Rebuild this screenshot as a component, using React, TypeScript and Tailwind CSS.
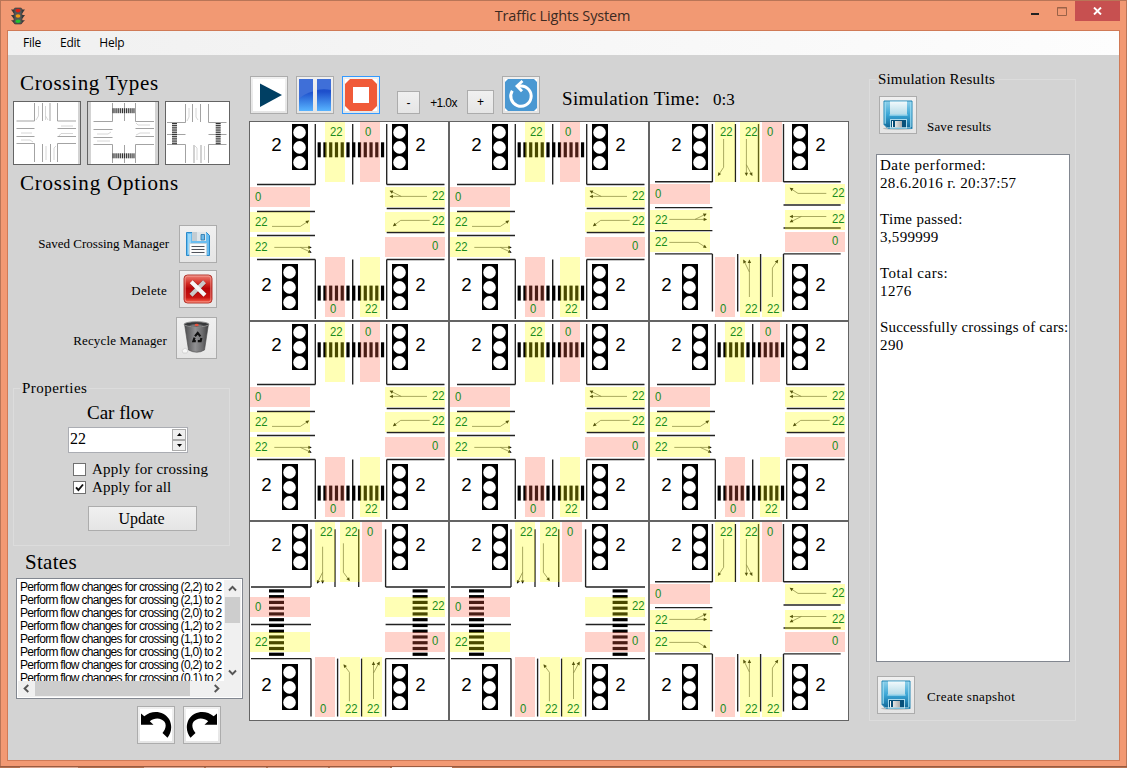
import React from "react";

type Pt = [number, number];
type Lane = { x: number; y: number; v: number; vertical?: boolean; tx: number; ty: number };
type Crossing = { lines: number[][]; arrows: Pt[][]; lanes: Lane[]; walks: { x: number; y: number; vertical?: boolean }[] };

const SERIF = "font-['Liberation_Serif',serif]";

const typeA: Crossing = {
  lines: [
    [66.3, 3, 66.3, 63.5], [103.7, 3, 103.7, 63.5], [137.7, 3, 137.7, 63.5],
    [8, 63.5, 66.3, 63.5], [137.7, 63.5, 195.5, 63.5],
    [8, 90.5, 66, 90.5], [8, 114.5, 66, 114.5], [8, 138.5, 66.3, 138.5],
    [137.7, 87.5, 195.5, 87.5], [137.7, 111.5, 195.5, 111.5], [137.7, 138.5, 195.5, 138.5],
    [66.3, 138.5, 66.3, 198], [103.7, 138.5, 103.7, 198], [137.7, 138.5, 137.7, 198],
  ],
  arrows: [
    [[23, 105.4], [51.3, 105.4], [59.5, 100]],
    [[25.3, 126.4], [62, 126.4]], [[51.3, 126.4], [62, 131.3]],
    [[178, 75.4], [141.3, 75.4]], [[152.3, 75.4], [141.3, 70]],
    [[180.7, 99.4], [151.7, 99.4], [144.5, 104.7]],
  ],
  lanes: [
    { x: 76, y: 1, v: 22, vertical: true, tx: 81, ty: 15 },
    { x: 111, y: 1, v: 0, vertical: true, tx: 116, ty: 15 },
    { x: 1, y: 66, v: 0, tx: 6, ty: 80 }, { x: 1, y: 91, v: 22, tx: 6, ty: 105 }, { x: 1, y: 116, v: 22, tx: 6, ty: 130 },
    { x: 136, y: 66, v: 22, tx: 183, ty: 79 }, { x: 136, y: 91, v: 22, tx: 183, ty: 104 }, { x: 136, y: 116, v: 0, tx: 183, ty: 129 },
    { x: 76, y: 136, v: 0, vertical: true, tx: 81, ty: 192 },
    { x: 111, y: 136, v: 22, vertical: true, tx: 116, ty: 192 },
  ],
  walks: [{ x: 68.6, y: 21.3 }, { x: 68.6, y: 164.6 }],
};

const typeB: Crossing = {
  lines: [
    [63.4, 3, 63.4, 61], [86.4, 3, 86.4, 61], [109.5, 3, 109.5, 61], [134.5, 3, 134.5, 61],
    [6, 60.7, 63.4, 60.7], [134.5, 60.7, 191.7, 60.7],
    [6, 86.6, 63.4, 86.6], [6, 109.6, 63.4, 109.6], [6, 132.8, 63.4, 132.8],
    [134.5, 84, 191.7, 84], [134.5, 107, 191.7, 107], [134.5, 132.8, 191.7, 132.8],
    [63.4, 133, 63.4, 190.5], [88.7, 133, 88.7, 190.5], [111.6, 133, 111.6, 190.5], [134.5, 133, 134.5, 190.5],
  ],
  arrows: [
    [[74.6, 18], [74.6, 46.3], [69.3, 54.3]],
    [[97.4, 18], [97.4, 54.3]], [[97.4, 43.7], [103, 54.3]],
    [[20.3, 98.4], [57.3, 98.4]], [[46, 98.4], [57, 93]],
    [[20.3, 121.4], [49, 121.4], [57, 126.5]],
    [[177.3, 72.4], [149, 72.4], [141.3, 67.3]],
    [[177.3, 95.5], [141.3, 95.5]], [[152.3, 95.5], [141.3, 101]],
    [[100.4, 176], [100.4, 139.3]], [[100.4, 151], [94.7, 139.3]],
    [[123.4, 176], [123.4, 147], [128.7, 139.3]],
  ],
  lanes: [
    { x: 66, y: 1, v: 22, vertical: true, tx: 71, ty: 15 },
    { x: 91, y: 1, v: 22, vertical: true, tx: 96, ty: 15 },
    { x: 113, y: 1, v: 0, vertical: true, tx: 118, ty: 15 },
    { x: 1, y: 63, v: 0, tx: 6, ty: 77 }, { x: 1, y: 89, v: 22, tx: 6, ty: 103 }, { x: 1, y: 111, v: 22, tx: 6, ty: 125 },
    { x: 136, y: 63, v: 22, tx: 183, ty: 76 }, { x: 136, y: 89, v: 22, tx: 183, ty: 102 }, { x: 136, y: 111, v: 0, tx: 183, ty: 124 },
    { x: 66, y: 136, v: 0, vertical: true, tx: 71, ty: 192 },
    { x: 91, y: 136, v: 22, vertical: true, tx: 96, ty: 192 },
    { x: 113, y: 136, v: 22, vertical: true, tx: 118, ty: 192 },
  ],
  walks: [],
};

const typeC: Crossing = {
  lines: [
    [62, 8.3, 62, 66], [86, 8.3, 86, 66], [109.7, 8.3, 109.7, 66], [136.6, 8.3, 136.6, 66],
    [2, 66, 62, 66], [136.6, 66, 196, 66], [2, 103.5, 62, 103.5], [136.6, 103.5, 196, 103.5],
    [2, 137.6, 62, 137.6], [136.6, 137.6, 196, 137.6],
    [62, 137.6, 62, 195.5], [88.6, 137.6, 88.6, 195.5], [112.6, 137.6, 112.6, 195.5], [136.6, 137.6, 136.6, 195.5],
  ],
  arrows: [
    [[73.6, 25.7], [73.6, 62]], [[73.6, 51.3], [68.3, 62]],
    [[94.4, 22.3], [94.4, 51.3], [100.3, 59.3]],
    [[100.4, 180.3], [100.4, 151.3], [95, 144]],
    [[124.5, 178], [124.5, 141.3]], [[124.5, 152], [130.3, 141.3]],
  ],
  lanes: [
    { x: 66, y: 1, v: 22, vertical: true, tx: 71, ty: 15 },
    { x: 91, y: 1, v: 22, vertical: true, tx: 96, ty: 15 },
    { x: 113, y: 1, v: 0, vertical: true, tx: 118, ty: 15 },
    { x: 1, y: 76, v: 0, tx: 6, ty: 90 }, { x: 1, y: 111, v: 22, tx: 6, ty: 125 },
    { x: 136, y: 76, v: 22, tx: 183, ty: 89 }, { x: 136, y: 111, v: 0, tx: 183, ty: 124 },
    { x: 66, y: 136, v: 0, vertical: true, tx: 71, ty: 192 },
    { x: 91, y: 136, v: 22, vertical: true, tx: 96, ty: 192 },
    { x: 113, y: 136, v: 22, vertical: true, tx: 118, ty: 192 },
  ],
  walks: [{ x: 20, y: 68.3, vertical: true }, { x: 163.6, y: 68.3, vertical: true }],
};

function Arrow({ pts }: { pts: Pt[] }) {
  const [x1, y1] = pts[pts.length - 2];
  const [x, y] = pts[pts.length - 1];
  const deg = (Math.atan2(y - y1, x - x1) * 180) / Math.PI;
  return (
    <g>
      <polyline points={pts.map((p) => p.join(",")).join(" ")} fill="none" stroke="#555" strokeWidth="0.7" />
      <path d="M0.8 0L-2.6 -1.7L-2.6 1.7Z" fill="#111" transform={`translate(${x} ${y}) rotate(${deg})`} />
    </g>
  );
}

function Signal({ x, y }: { x: number; y: number }) {
  return (
    <g>
      <rect x={x} y={y} width="16" height="46" fill="#000" />
      {[8.4, 23.4, 38.4].map((dy) => (
        <circle key={dy} cx={x + 7.5} cy={y + dy} r="6.3" fill="#fff" />
      ))}
    </g>
  );
}

function CrossingTile({ c }: { c: Crossing }) {
  return (
    <div className="h-[200px] w-[200px] border border-[#646464] bg-white">
      <svg className="block" width="198" height="198" viewBox="1 1 198 198">
        {c.lines.map((l, i) => (
          <line key={i} x1={l[0]} y1={l[1]} x2={l[2]} y2={l[3]} stroke="#222" strokeWidth="1.35" />
        ))}
        {c.walks.map((w, i) =>
          Array.from({ length: 12 }, (_, k) => (
            <rect
              key={`${i}-${k}`}
              x={w.vertical ? w.x : w.x + k * 5.76}
              y={w.vertical ? w.y + k * 5.76 : w.y}
              width={w.vertical ? 15 : 3.2}
              height={w.vertical ? 3.2 : 15}
              fill="#000"
            />
          )),
        )}
        {c.arrows.map((a, i) => <Arrow key={i} pts={a} />)}
        {c.lanes.map((l, i) => (
          <rect
            key={i}
            x={l.x}
            y={l.y}
            width={l.vertical ? 20 : 60}
            height={l.vertical ? 60 : 20}
            fill={l.v ? "#ffff00" : "#ff6347"}
            fillOpacity="0.29"
          />
        ))}
        <g fontFamily="Liberation Sans, sans-serif" fontSize="12.3" fill="#1c8c1c">
          {c.lanes.map((l, i) => (
            <text key={i} x={l.tx} y={l.ty} textLength={l.v ? 12.6 : 6.3} lengthAdjust="spacingAndGlyphs">{l.v}</text>
          ))}
        </g>
        <Signal x={43} y={3} />
        <Signal x={143} y={3} />
        <Signal x={33} y={143} />
        <Signal x={143} y={143} />
        <g fontFamily="Liberation Sans, sans-serif" fontSize="18.67" fill="#000">
          <text x="22.2" y="30">2</text>
          <text x="166.2" y="30">2</text>
          <text x="12.2" y="170">2</text>
          <text x="166.2" y="170">2</text>
        </g>
      </svg>
    </div>
  );
}

function Bars({ x, y, vertical }: { x: number; y: number; vertical?: boolean }) {
  return (
    <g fill="#333">
      {Array.from({ length: 12 }, (_, k) => (
        <rect
          key={k}
          x={vertical ? x : x + k * 1.9}
          y={vertical ? y + k * 1.83 : y}
          width={vertical ? 5 : 1.15}
          height={vertical ? 1.1 : 5}
        />
      ))}
    </g>
  );
}

function Thumb({ w, d, faint, side, children }: { w: string; d: string; faint: string; side: [number, number][]; children?: React.ReactNode }) {
  return (
    <div className={`h-16 border border-[#646464] bg-white ${w}`}>
      <svg className="block h-full w-full">
        {side.map(([x, sw]) => <rect key={x} x={x} y="0" width={sw} height="62" fill="#d3d3d3" />)}
        <path d={d} fill="none" stroke="#999" strokeWidth="0.9" />
        <path d={faint} fill="none" stroke="#cccccc" strokeWidth="0.8" />
        {children}
      </svg>
    </div>
  );
}

function Btn({ size = "h-[38px] w-[38px]", border = "border-[#acacac]", children }: { size?: string; border?: string; children: React.ReactNode }) {
  return (
    <button className={`flex shrink-0 items-center justify-center border bg-linear-to-b from-[#f0f0f0] to-[#e5e5e5] ${border} ${size}`}>
      {children}
    </button>
  );
}

function BlueDisk() {
  return (
    <svg width="32" height="32" viewBox="0 0 32 32">
      <defs>
        <linearGradient id="bd" x1="0" y1="0" x2="0" y2="1">
          <stop offset="0" stopColor="#8fd0ea" />
          <stop offset="0.5" stopColor="#3aa6d6" />
          <stop offset="1" stopColor="#0e6394" />
        </linearGradient>
        <linearGradient id="bl" x1="0" y1="0" x2="0" y2="1">
          <stop offset="0" stopColor="#f2fafc" />
          <stop offset="1" stopColor="#b5dbe8" />
        </linearGradient>
        <linearGradient id="bs" x1="0" y1="0" x2="1" y2="0">
          <stop offset="0" stopColor="#fff" />
          <stop offset="1" stopColor="#aaa" />
        </linearGradient>
      </defs>
      <ellipse cx="16" cy="29.5" rx="15" ry="1.5" fill="#bbb" />
      <path d="M2 2H30V29.5H6L2 25.5Z" fill="url(#bd)" stroke="#2587b5" strokeWidth="1" />
      <path d="M3.2 3V24.8M28.8 3V28" stroke="#9bdaf0" strokeWidth="1.2" />
      <rect x="8" y="2.5" width="17" height="13" fill="url(#bl)" />
      <path d="M7.5 16H25.5" stroke="#c8ecf6" strokeWidth="1" />
      <rect x="8.5" y="20.5" width="16" height="8.5" fill="#08507a" stroke="#a9d9ec" />
      <rect x="10" y="22" width="10" height="6.5" fill="url(#bs)" />
      <rect x="11" y="22" width="2" height="6" fill="#064a73" />
      <path d="M5 28.8H29" stroke="#d6f1fa" strokeWidth="0.7" />
    </svg>
  );
}

function SaveDisk() {
  return (
    <svg width="26" height="26" viewBox="0 0 26 26">
      <path d="M1.5 1.5H21.5L24.5 4.5V24.5H1.5Z" fill="#69bdf0" stroke="#2a8bcb" />
      <path d="M3 3H6V23H3Z" fill="#9ad7f8" />
      <path d="M7 1H21V10H7Z" fill="#dfe5e9" />
      <path d="M7 1H12V10H7Z" fill="#c3ccd2" />
      <path d="M16 3.5H19.5V9H16Z" fill="#6fb9e8" stroke="#2473a8" strokeWidth="0.8" />
      <path d="M4.5 12.5H21.5V24.5H4.5Z" fill="#fbfbfb" stroke="#c8d2d8" strokeWidth="0.8" />
      <path d="M6.5 15.5H19.5M6.5 18.5H19.5M6.5 21.5H19.5" stroke="#50545c" strokeWidth="1" />
    </svg>
  );
}

function DeleteIcon() {
  return (
    <svg width="32" height="32" viewBox="0 0 32 32">
      <defs>
        <linearGradient id="dr" x1="0" y1="0" x2="0" y2="1">
          <stop offset="0" stopColor="#ee8378" />
          <stop offset="0.3" stopColor="#d22a22" />
          <stop offset="0.48" stopColor="#b80508" />
          <stop offset="0.8" stopColor="#c91412" />
          <stop offset="1" stopColor="#ff6f55" />
        </linearGradient>
      </defs>
      <rect x="2" y="2" width="28" height="28" rx="3.5" fill="url(#dr)" stroke="#b23a32" />
      <rect x="3.2" y="3.2" width="25.6" height="25.6" rx="2.5" fill="none" stroke="#f3a49b" strokeWidth="0.7" />
      <path d="M9.5 9.2L23 22.2M22.5 9L9 22.4" stroke="#6d0f0e" strokeWidth="5.2" opacity="0.5" />
      <path d="M22.5 8.8L9 22.2" stroke="#c9c9c9" strokeWidth="4.2" />
      <path d="M9.2 8.8L23 22.2" stroke="#f7f7f7" strokeWidth="4.2" />
    </svg>
  );
}

function BinIcon() {
  return (
    <svg width="36" height="36" viewBox="0 0 36 36">
      <defs>
        <linearGradient id="bin" x1="0" y1="0" x2="1" y2="0">
          <stop offset="0" stopColor="#4c4c4e" />
          <stop offset="0.45" stopColor="#909092" />
          <stop offset="0.75" stopColor="#6b6b6d" />
          <stop offset="1" stopColor="#3e3e40" />
        </linearGradient>
      </defs>
      <path d="M5.5 4L9.5 30Q18 34.5 25.5 30L29.5 4Z" fill="url(#bin)" stroke="#4a4a4a" strokeWidth="0.6" />
      <ellipse cx="17.5" cy="4.3" rx="12.3" ry="2.6" fill="#37383a" stroke="#8c8c8c" strokeWidth="1" />
      <path d="M10 5.2Q17 3.5 25 5.2Q17 7 10 5.2Z" fill="#77777a" />
      <ellipse cx="17.7" cy="5" rx="2" ry="1.3" fill="#e4523e" />
      <path d="M16 16.2L18.7 12.9L21.4 16.4M22.4 18L21.6 21.2H18.8M16.8 21.2H14.4L15.6 17.6" fill="none" stroke="#111" strokeWidth="2.2" />
      <path d="M3 30.5L6 28L9 30L8 33H4Z" fill="#f7f7f7" stroke="#c5c5c5" strokeWidth="0.6" />
    </svg>
  );
}

function UndoIcon({ flip }: { flip?: boolean }) {
  return (
    <svg width="32" height="32" viewBox="0 0 32 32" className={flip ? "-scale-x-100" : ""}>
      <rect width="32" height="32" fill="#fff" />
      <path d="M1 4.5L4.3 7.3C12 0.5 24 2 29 10C33 17 31 24.5 27.5 28.7L22.5 24C26 20 26.5 15.5 24.5 12.8C21.5 8.7 14.5 8 9.8 12.3L13.5 15.8H1Z" fill="#000" />
    </svg>
  );
}

function TrafficIcon() {
  return (
    <svg width="16" height="18" viewBox="0 0 16 18">
      <path d="M1 2.5H15L12.5 6H3.5ZM1 8H15L12.5 11.5H3.5ZM1 13.3H15L11.5 16.5H4.5Z" fill="#3c3c3c" />
      <rect x="4" y="1" width="8" height="16" rx="1.5" fill="#555" stroke="#333" strokeWidth="0.6" />
      <ellipse cx="8" cy="3.6" rx="2.4" ry="1.8" fill="#e01d12" />
      <ellipse cx="8" cy="9" rx="2.4" ry="1.8" fill="#f39b12" />
      <ellipse cx="8" cy="14.3" rx="2.4" ry="1.8" fill="#1fc42f" />
    </svg>
  );
}

function Check({ label, checked, tracking }: { label: string; checked?: boolean; tracking: string }) {
  return (
    <label className="flex h-[13px] items-center gap-1.5">
      <span className="flex h-[13px] w-[13px] items-center justify-center border border-[#707070] bg-white">
        {checked && (
          <svg width="11" height="11" viewBox="0 0 11 11">
            <path d="M2 5.3L4.4 8L9 2.5" fill="none" stroke="#111" strokeWidth="1.9" />
          </svg>
        )}
      </span>
      <span className={`text-[15px] leading-[13px] whitespace-nowrap ${tracking}`}>{label}</span>
    </label>
  );
}

function Chevron({ d }: { d: string }) {
  return (
    <svg width="9" height="9" viewBox="0 0 9 9">
      <path d={d} fill="none" stroke="#555" strokeWidth="1.9" />
    </svg>
  );
}

const tiles = [typeA, typeA, typeB, typeA, typeA, typeA, typeC, typeC, typeB];
const states = ["(2,2)", "(2,1)", "(2,0)", "(1,2)", "(1,1)", "(1,0)", "(0,2)", "(0,1)"];

function LeftPanel() {
  return (
    <aside className={`flex w-[241px] shrink-0 flex-col pt-4 ${SERIF}`}>
      <h2 className="pl-3 text-[21px] leading-6 tracking-[0.67px]">Crossing Types</h2>
      <div className="mt-1.5 flex pl-[5px]">
        <Thumb
          w="w-[68px]"
          side={[[64, 3]]}
          d="M20.5 1V19H2.5M28.5 1V19M36 1V19M43.5 1V19H62M2.5 26.5H20.5M2.5 34.5H20.5M2.5 41.5H20.5V60M43.5 26.5H62M43.5 34.5H62M62 41.5H43.5V60M28.5 42V60M36.5 42V60"
          faint="M24.5 4V14L22 18M31.5 4V18M34 18L31.5 14M7 31H18M7 38H16L19 40M59 24H47M59 31.5H47L45 34M32 58V44M40 58V46L42 44"
        />
        <div className="w-1.5" />
        <Thumb
          w="w-[72px]"
          side={[[0, 3], [67, 3]]}
          d="M24.5 1V19.5H5.5M36.5 1V19M47.5 1V19.5H66M5.5 27.5H24.5M5.5 35.5H24.5M5.5 42.5H24.5V61M47.5 26.5H66M47.5 34.5H66M66 42.5H47.5V61M36.5 43V61"
          faint="M9 32H20L23 30M9 39H22M62 23H50L48 21M62 31H52L48 33"
        >
          <Bars x={24.5} y={6.2} />
          <Bars x={24.5} y={51.3} />
        </Thumb>
        <div className="w-1.5" />
        <Thumb
          w="w-[65px]"
          side={[]}
          d="M19.5 2V20.5H1M26.5 2V20M34.5 2V20M42.5 2V20.5H60.5M1 32.5H19.5M42.5 32.5H60.5M1 42.5H19.5V61M28 43V61M35 43V61M60.5 42.5H42.5V61"
          faint="M23 6V15L21 19M30 6V15L32 18M31 58V46L29 44M38.5 58V44"
        >
          <Bars x={6} y={21} vertical />
          <Bars x={49.7} y={21} vertical />
        </Thumb>
      </div>
      <h2 className="mt-1.5 pl-3 text-[21px] leading-6 tracking-[0.78px]">Crossing Options</h2>

      <div className="mt-[30px] flex flex-col items-end pr-8 text-[13px]">
        <div className="flex items-center gap-2.5"><span>Saved Crossing Manager</span><Btn><SaveDisk /></Btn></div>
        <div className="mt-[7px] flex items-center gap-3"><span className="pt-1 tracking-[0.3px]">Delete</span><Btn><DeleteIcon /></Btn></div>
        <div className="mt-[9px] flex items-center gap-[9px]">
          <span className="pt-1.5 tracking-[0.17px]">Recycle Manager</span>
          <Btn size="h-[42px] w-[41px]"><BinIcon /></Btn>
        </div>
      </div>

      <section className="mt-[29px] ml-[5px] h-[158px] w-[217px] border border-[#dcdcdc]">
        <h3 className="-mt-[10px] ml-1.5 w-fit bg-[#d3d3d3] px-0.5 text-[15px] leading-[18px] tracking-[0.45px]">Properties</h3>
        <div className="mt-[5px] pl-[73px] text-[19px] leading-[22px]">Car flow</div>
        <div className="mt-[3px] ml-[54px] flex h-[26px] w-[120px] justify-between border border-[#abadb3] bg-white p-px">
          <span className="text-[16px] leading-5">22</span>
          <div className="flex w-3.5 flex-col">
            <div className="flex flex-1 items-center justify-center border border-[#acacac] bg-[#efefef]">
              <svg width="5" height="3"><path d="M0 3L2.5 0L5 3Z" /></svg>
            </div>
            <div className="flex flex-1 items-center justify-center border border-[#acacac] bg-[#efefef]">
              <svg width="5" height="3"><path d="M0 0L2.5 3L5 0Z" /></svg>
            </div>
          </div>
        </div>
        <div className="mt-2.5 ml-[59px] flex flex-col gap-[5px]">
          <Check label="Apply for crossing" tracking="tracking-[0.2px]" />
          <Check label="Apply for all" checked tracking="tracking-[0.15px]" />
        </div>
        <button className="mt-3 ml-[74px] block h-[25px] w-[109px] border border-[#acacac] bg-linear-to-b from-[#f0f0f0] to-[#e5e5e5] pr-0.5 text-[16px] leading-[22px]">Update</button>
      </section>

      <h2 className="mt-1 pl-[17px] text-[21px] leading-6 tracking-[0.3px]">States</h2>
      <div className="mt-1 ml-2 flex h-[121px] w-[227px] flex-col border border-[#828790] bg-white p-px font-['Liberation_Sans',sans-serif]">
        <div className="flex h-[101px] justify-between">
          <div className="w-[206px] overflow-hidden pt-px pl-0.5">
            {states.map((s) => (
              <div key={s} className="h-[13px] text-[12px] leading-[13px] tracking-[-0.71px] whitespace-nowrap">Perform flow changes for crossing {s} to 2</div>
            ))}
          </div>
          <div className="flex w-[17px] flex-col items-center justify-between bg-[#f0f0f0] pb-1">
            <div className="flex h-[17px] items-center"><Chevron d="M1 6.5L4.5 2.8L8 6.5" /></div>
            <div className="h-[26px] w-[15px] bg-[#cdcdcd]" />
            <div className="flex-1" />
            <Chevron d="M1 2.5L4.5 6.2L8 2.5" />
          </div>
        </div>
        <div className="flex flex-1 items-center bg-[#f0f0f0] pb-px pl-1">
          <Chevron d="M6.3 1L2.6 4.5L6.3 8" />
          <div className="ml-1 h-[15px] w-[155px] bg-[#cdcdcd]" />
          <div className="ml-[22px] flex"><Chevron d="M2.7 1L6.4 4.5L2.7 8" /></div>
        </div>
      </div>
      <div className="mt-[7px] flex gap-2 pl-[129px]">
        <Btn><UndoIcon /></Btn>
        <Btn><UndoIcon flip /></Btn>
      </div>
    </aside>
  );
}

function Center() {
  return (
    <main className="flex w-[600px] shrink-0 flex-col">
      <div className="flex h-[66px] items-end pb-[7px] pl-px font-['Liberation_Sans',sans-serif] text-[12px]">
        <Btn>
          <svg width="32" height="32"><rect width="32" height="32" fill="#fff" /><path d="M7 4.5L29 16L7 28Z" fill="#003f63" /></svg>
        </Btn>
        <div className="w-2" />
        <Btn>
          <svg width="32" height="32">
            <defs>
              <linearGradient id="pz" x1="0" y1="0" x2="0" y2="1"><stop offset="0" stopColor="#1648c4" /><stop offset="0.4" stopColor="#1e50cc" /><stop offset="1" stopColor="#58b4ff" /></linearGradient>
            </defs>
            <path d="M0 0H14V32H0ZM18 0H32V32H18Z" fill="url(#pz)" />
            <path d="M0 0H14V12.5Q5 14.5 0 20ZM18 0H32V11Q25 9.5 18 11Z" fill="#3f6fd8" />
          </svg>
        </Btn>
        <div className="w-2" />
        <Btn border="border-[#3399ff]">
          <svg width="32" height="32">
            <rect width="32" height="32" fill="#fff" />
            <path d="M5 0H27L32 5V27L27 32H5L0 27V5Z" fill="#f05a38" />
            <rect x="8" y="8" width="16" height="16" fill="#fff" />
          </svg>
        </Btn>
        <div className="w-[17px]" />
        <Btn size="h-[23px] w-[23px]">-</Btn>
        <span className="w-[47px] pb-[3px] text-center leading-4 tracking-[-0.6px]">+1.0x</span>
        <Btn size="h-6 w-[27px]">+</Btn>
        <div className="w-2" />
        <Btn>
          <svg width="32" height="32">
            <rect width="32" height="32" fill="#fff" />
            <path d="M3 0H29L32 3V29L29 32H3L0 29V3Z" fill="#4a98d2" />
            <path d="M7.3 11.7A10.2 10.2 0 1 0 16 6.9H12" fill="none" stroke="#fff" strokeWidth="3" />
            <path d="M17.5 2L12 7L17 12.2" fill="none" stroke="#fff" strokeWidth="2.8" />
          </svg>
        </Btn>
        <div className={`flex items-baseline pb-0.5 pl-[22px] leading-6 ${SERIF}`}>
          <span className="text-[19px] tracking-[0.35px]">Simulation Time:</span>
          <span className="pl-[13px] text-[17px]">0:3</span>
        </div>
      </div>
      <div className="grid w-[600px] grid-cols-3">
        {tiles.map((t, i) => <CrossingTile key={i} c={t} />)}
      </div>
    </main>
  );
}

function Results() {
  return (
    <aside className={`mt-6 ml-5 flex h-[642px] w-[207px] shrink-0 flex-col border border-[#dcdcdc] ${SERIF}`}>
      <h3 className="-mt-[10px] ml-1.5 w-fit bg-[#d3d3d3] px-0.5 text-[15px] leading-[18px] tracking-[0.18px]">Simulation Results</h3>
      <div className="mt-2 flex h-[38px] items-end gap-2.5 pl-[9px] text-[13px]">
        <Btn><BlueDisk /></Btn>
        <span className="leading-[15px] tracking-[0.15px]">Save results</span>
      </div>
      <div className="mt-5 ml-1.5 h-[508px] w-[194px] border border-[#828790] bg-white pt-px pl-[3px] text-[15px] leading-[18px] whitespace-nowrap">
        <div className="tracking-[0.5px]">Date performed:</div>
        <div className="tracking-[0.35px]">28.6.2016 г. 20:37:57</div>
        <div className="mt-[18px] tracking-[0.3px]">Time passed:</div>
        <div className="tracking-[0.3px]">3,599999</div>
        <div className="mt-[18px] tracking-[0.5px]">Total cars:</div>
        <div className="tracking-[0.4px]">1276</div>
        <div className="mt-[18px] tracking-[0.15px]">Successfully crossings of cars:</div>
        <div className="tracking-[0.4px]">290</div>
      </div>
      <div className="mt-3.5 flex items-center gap-3 pl-[7px] text-[13px]">
        <Btn><BlueDisk /></Btn>
        <span className="pt-1 tracking-[0.37px]">Create snapshot</span>
      </div>
    </aside>
  );
}

export default function App() {
  return (
    <div className="flex h-[768px] w-[1127px] flex-col overflow-hidden bg-[#b4704f] text-black">
      <div className="flex h-[766px] flex-col border border-b-0 border-[#b97557] bg-[#f29973] px-1.5 pb-[5px]">
        <header className="flex h-[29px] items-start">
          <div className="pt-1.5 pl-[3px]"><TrafficIcon /></div>
          <div className="flex-1 pt-[5px] pl-[69px] text-center font-['Open_Sans',sans-serif] text-[14.5px] leading-5 tracking-[-0.15px] text-[#3b2a22]">Traffic Lights System</div>
          <svg className="mt-[5px]" width="38" height="12">
            <rect x="1" y="7" width="8" height="2" fill="#222" />
            <path d="M27.5 1.5H36.5V9.5H27.5ZM27 2H37" fill="none" stroke="#9a6248" />
          </svg>
          <div className="ml-[7px] flex h-5 w-[45px] items-center justify-center bg-[#c75050]">
            <svg width="9" height="8"><path d="M1 0.5L8 7.5M8 0.5L1 7.5" stroke="#fff" strokeWidth="1.9" /></svg>
          </div>
        </header>
        <div className="flex flex-1 flex-col border border-[#d07a56]">
          <nav className="flex h-6 items-center gap-[19px] bg-linear-to-r from-[#f0f0f0] to-[#fdfdfd] pl-[15px] font-['Open_Sans',sans-serif] text-[12px] tracking-[-0.25px]">
            <span>File</span>
            <span>Edit</span>
            <span>Help</span>
          </nav>
          <div className="flex flex-1 bg-[#d3d3d3]">
            <LeftPanel />
            <Center />
            <Results />
          </div>
        </div>
      </div>
      <div className="flex h-0.5 gap-[2px] border-t border-[#9a5c42] pl-5">
        <div className="mr-16 h-px w-[58px] bg-[#dba793]" />
        <div className="h-px w-[60px] bg-[#dba793]" />
        <div className="h-px w-[60px] bg-[#dba793]" />
        <div className="h-px w-[60px] bg-[#dba793]" />
        <div className="h-px w-[60px] bg-[#dba793]" />
        <div className="h-px w-[60px] bg-[#fbeee8]" />
      </div>
    </div>
  );
}
